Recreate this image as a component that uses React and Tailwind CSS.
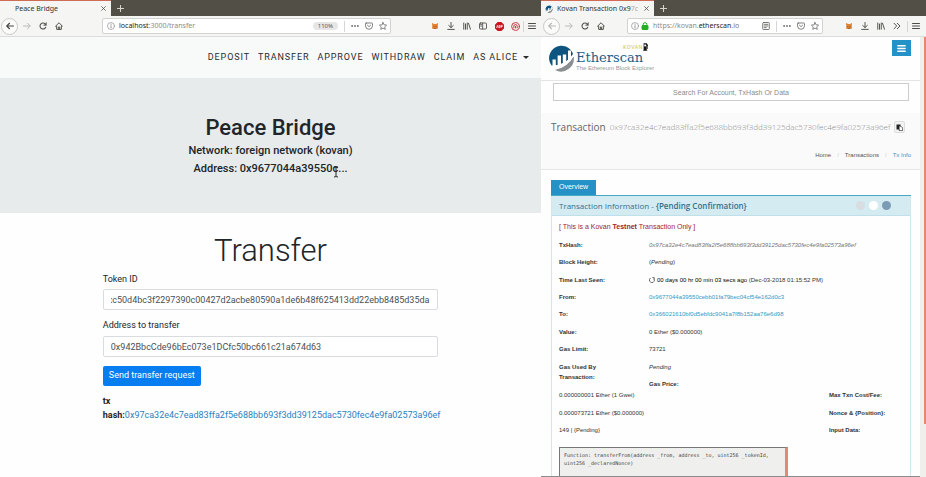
import { useEffect, useRef } from "react";

const TX_HASH = "0x97ca32e4c7ead83ffa2f5e688bb693f3dd39125dac5730fec4e9fa02573a96ef";

function Icon({ children, className = "size-2 text-[#55554f]", width = 1.8 }) {
  return (
    <svg
      viewBox="0 0 16 16"
      className={`shrink-0 ${className}`}
      fill="none"
      stroke="currentColor"
      strokeWidth={width}
      strokeLinecap="round"
      strokeLinejoin="round"
      aria-hidden="true"
    >
      {children}
    </svg>
  );
}

const BackIcon = ({ className }) => (
  <Icon className={className} width={2.2}><path d="M15 8H2M7 2.5L1.5 8L7 13.5" /></Icon>
);
const ForwardIcon = () => (
  <Icon className="size-2 text-[#b9b9b5]" width={2}><path d="M1 8H14M9 2.5L14.5 8L9 13.5" /></Icon>
);
const ReloadIcon = () => (
  <Icon width={2.2}>
    <path d="M13.5 10.5A6 6 0 1 1 12.5 4" />
    <path d="M15 1V7H9Z" fill="currentColor" strokeWidth="0.6" />
  </Icon>
);
const HomeIcon = () => (
  <Icon width={2}>
    <path d="M1 8.5L8 1.5L15 8.5M3.3 8V14.8H12.7V8" />
    <path d="M6.7 14.5V10H9.3V14.5" />
  </Icon>
);
const InfoIcon = () => (
  <Icon className="size-2 text-[#8a8a86]" width={1.3}>
    <circle cx="8" cy="8" r="7" />
    <path d="M8 7.5V11.8M8 4.3V4.8" strokeWidth="1.8" />
  </Icon>
);
const DotsIcon = () => (
  <Icon className="size-2 text-[#6b6b67]">
    <g fill="currentColor" stroke="none">
      <circle cx="2.2" cy="8" r="1.8" />
      <circle cx="8" cy="8" r="1.8" />
      <circle cx="13.8" cy="8" r="1.8" />
    </g>
  </Icon>
);
const PocketIcon = () => (
  <Icon className="size-2 text-[#6b6b67]" width={1.7}>
    <path d="M2.4 2H13.6Q15 2 15 3.4V7.5A7 7 0 0 1 1 7.5V3.4Q1 2 2.4 2Z" />
    <path d="M4.8 6.3L8 9.4L11.2 6.3" />
  </Icon>
);
const StarIcon = () => (
  <Icon className="size-2 text-[#6b6b67]" width={1.6}>
    <path d="M8 1L10.2 5.6L15.2 6.2L11.5 9.7L12.5 14.7L8 12.2L3.5 14.7L4.5 9.7L0.8 6.2L5.8 5.6Z" />
  </Icon>
);
const FoxIcon = () => (
  <Icon className="size-2">
    <g stroke="none">
      <path d="M2 2L6.5 4H10L14 2L13.5 9L14 13L10 14H6L2 13L2.7 9Z" fill="#e2812f" />
      <path d="M5 8L7 9L5.5 10.5ZM11 8L9 9L10.5 10.5Z" fill="#5b3413" />
      <path d="M6.5 12H9.5V14H6.5Z" fill="#8a5a33" />
    </g>
  </Icon>
);
const DownloadIcon = () => (
  <Icon width={2}><path d="M8 1V11M3.5 7L8 11.2L12.5 7M1.5 14.8H14.5" /></Icon>
);
const LibraryIcon = () => (
  <Icon width={2}><path d="M1.5 2V14.5M5 4V14.5M8.5 2V14.5M11 2.5L15 14.5" /></Icon>
);
const SidebarIcon = () => (
  <Icon width={1.8}>
    <rect x="1" y="2" width="14" height="12" rx="1.8" />
    <path d="M7.3 2V14M3.3 5H5M3.3 8H5" />
  </Icon>
);
const MenuIcon = () => (
  <Icon className="size-2 text-[#45453f]" width={1.9}><path d="M1 3H15M1 8H15M1 13H15" /></Icon>
);
const ChevronsIcon = () => (
  <Icon width={2}><path d="M2 2.5L7.5 8L2 13.5M8.5 2.5L14 8L8.5 13.5" /></Icon>
);
const ReaderIcon = () => (
  <Icon className="size-2 text-[#6b6b67]" width={1.8}>
    <rect x="1.5" y="1" width="13" height="14" rx="1.5" />
    <path d="M4.5 4.7H11.5M4.5 8H11.5M4.5 11.3H8.5" />
  </Icon>
);
const LockIcon = () => (
  <Icon className="size-2 text-[#22b022]" width={2}>
    <rect x="2" y="7" width="12" height="8" rx="1" fill="currentColor" />
    <path d="M4.5 7V4.8A3.5 3.5 0 0 1 11.5 4.8V7" />
  </Icon>
);
const AdblockIcon = () => (
  <Icon className="size-[9px]">
    <path d="M5 1H11L15 5V11L11 15H5L1 11V5Z" fill="#c9151f" stroke="#c9151f" />
    <path d="M3 10L4.3 6L5.6 10M7.2 6V10H8.7V6M10.8 10V6H13V8H11" stroke="#fff" strokeWidth="1.2" />
  </Icon>
);
const RedRingIcon = () => (
  <Icon className="size-[9px] text-[#c2313a]" width={1.7}>
    <circle cx="8" cy="8" r="6.9" />
    <path d="M5 10.5V7.5A3 3 0 0 1 11 7.5V10.5M8 8V10.5" />
  </Icon>
);

function ToolButton({ label, children }) {
  return (
    <button type="button" aria-label={label} className="flex size-4 shrink-0 items-center justify-center">
      {children}
    </button>
  );
}

function TabStrip({ title, icon, wide }) {
  return (
    <div className="flex h-4 bg-[#524f47]">
      <div
        className={`flex items-center border-t border-[#cf6c58] bg-[#f5f5f3] ${wide ? "w-[113px] pl-1" : "w-[111px] pl-[15px]"}`}
      >
        {icon}
        <span className="min-w-0 flex-1 overflow-hidden whitespace-nowrap text-[7px] leading-[14px] text-[#33332f]">
          {title}
        </span>
        <button type="button" aria-label="Close tab" className="flex w-4 shrink-0 justify-center">
          <Icon className="size-[5px] text-[#55554f]" width={2.6}><path d="M2 2L14 14M14 2L2 14" /></Icon>
        </button>
      </div>
      <button type="button" aria-label="New tab" className="flex w-[18px] items-center justify-center">
        <Icon className="size-[7px] text-[#d6d5cf]" width={2.4}><path d="M8 1V15M1 8H15" /></Icon>
      </button>
    </div>
  );
}

function NavButtons({ dim }) {
  return (
    <div className="flex items-center">
      <button
        type="button"
        aria-label="Back"
        className="mr-px flex size-[17px] shrink-0 items-center justify-center rounded-full border border-[#c9c9c6] bg-[#fbfbfa]"
      >
        <BackIcon className={dim ? "size-2 text-[#b9b9b5]" : "size-2 text-[#45453f]"} />
      </button>
      <ToolButton label="Forward"><ForwardIcon /></ToolButton>
      <ToolButton label="Reload"><ReloadIcon /></ToolButton>
      <ToolButton label="Home"><HomeIcon /></ToolButton>
    </div>
  );
}

function Divider() {
  return <span className="h-[11px] w-px shrink-0 bg-[#d6d6d2]" />;
}

function BridgeWindow() {
  const tokenRef = useRef(null);
  useEffect(() => {
    tokenRef.current.scrollLeft = tokenRef.current.scrollWidth;
  }, []);
  const links = ["Deposit", "Transfer", "Approve", "Withdraw", "Claim"];
  const field =
    "block h-[21px] w-full rounded-xs border border-[#d9dcde] bg-white px-[7px] text-[9px] text-[#495057]";

  return (
    <section className="flex min-w-0 flex-col bg-[#fdfefd]">
      <TabStrip title="Peace Bridge" />
      <div className="flex h-[21px] items-center border-b border-[#dcdcda] bg-[#f5f5f3] pr-px pl-px">
        <NavButtons />
        <div className="ml-[35px] flex h-4 min-w-0 flex-1 items-center rounded-xs border border-[#d2d2cf] bg-white pr-[3px] pl-1">
          <InfoIcon />
          <p className="ml-1 flex-1 truncate text-[7px] leading-3 text-[#8b8b88]">
            <span className="text-[#222]">localhost</span>:3000/transfer
          </p>
          <span className="mr-[6px] rounded-full bg-[#e6e6e4] px-[5px] text-[6px] leading-2 text-[#555]">110%</span>
          <Divider />
          <div className="ml-[6px] flex gap-[6px]">
            <DotsIcon /><PocketIcon /><StarIcon />
          </div>
        </div>
        <div className="ml-9 flex items-center">
          <ToolButton label="Wallet"><FoxIcon /></ToolButton>
          <ToolButton label="Downloads"><DownloadIcon /></ToolButton>
          <ToolButton label="Library"><LibraryIcon /></ToolButton>
          <ToolButton label="Sidebars"><SidebarIcon /></ToolButton>
          <ToolButton label="Ad blocker"><AdblockIcon /></ToolButton>
          <ToolButton label="Privacy"><RedRingIcon /></ToolButton>
          <Divider />
          <ToolButton label="Menu"><MenuIcon /></ToolButton>
        </div>
      </div>

      <nav className="flex h-[41px] items-center justify-end gap-2 bg-[#f8faf9] pr-3 font-[Roboto,sans-serif] text-[9px] tracking-widest text-[#292b2c] uppercase">
        {links.map((l) => (
          <a key={l} href="#" className="whitespace-nowrap">{l}</a>
        ))}
        <button type="button" className="flex items-center gap-[5px] whitespace-nowrap uppercase tracking-widest">
          As Alice
          <span className="border-x-3 border-t-3 border-x-transparent border-t-[#292b2c]" />
        </button>
      </nav>

      <header className="h-[135px] bg-[#e8ebeb] pt-9 text-center font-[Roboto,sans-serif] font-medium text-[#212529]">
        <h1 className="text-[22px] leading-7">Peace Bridge</h1>
        <p className="text-[11px] leading-[18px]">Network: foreign network (kovan)</p>
        <p className="text-[11px] leading-[18px]">
          Address: 0x9677044a39550
          <span className="relative">
            c
            <svg viewBox="0 0 6 12" className="absolute top-1 left-0 h-3 w-[6px]" fill="none" stroke="#222" strokeWidth="1" aria-hidden="true">
              <path d="M1 1Q3 1 3 2Q3 1 5 1M3 2V10M1 11Q3 11 3 10Q3 11 5 11" />
            </svg>
          </span>
          ...
        </p>
      </header>

      <main className="mx-auto w-[62%] max-w-[420px] pt-5 font-[Roboto,sans-serif] text-[9px] text-[#212529]">
        <h2 className="text-center text-[31px] leading-9 font-light">Transfer</h2>
        <form onSubmit={(e) => e.preventDefault()}>
          <label htmlFor="token" className="mt-[3px] block leading-[14px]">Token ID</label>
          <input
            id="token"
            ref={tokenRef}
            className={`mt-[3px] ${field}`}
            defaultValue="0xc50d4bc3f2297390c00427d2acbe80590a1de6b48f625413dd22ebb8485d35da"
          />
          <label htmlFor="address" className="mt-2 block leading-[14px]">Address to transfer</label>
          <input
            id="address"
            className={`mt-1 ${field}`}
            defaultValue="0x942BbcCde96bEc073e1DCfc50bc661c21a674d63"
          />
          <button type="submit" className="mt-[9px] block h-5 rounded-xs bg-[#067df0] px-[6px] text-white">
            Send transfer request
          </button>
        </form>
        <p className="mt-2 leading-[14px] font-bold">
          tx<br />
          hash:<a href="#" className="font-normal text-[#2b7fc4]">{TX_HASH}</a>
        </p>
      </main>
    </section>
  );
}

function EtherscanMark({ className }) {
  return (
    <svg viewBox="0 0 26 28" className={`shrink-0 ${className}`} aria-hidden="true">
      <path d="M3.6 21.5A12.3 12.3 0 1 1 25 10Q22 15.5 17 18.5Q11 21.5 3.6 21.5Z" fill="#0d5480" />
      <path d="M25.7 12.5A12.9 12.9 0 0 1 7 26Q20 23.5 25.7 12.5Z" fill="#8b8f92" />
      <path d="M4.5 22V15.5H7.8V22ZM9.6 22V11.5H13V21ZM14.8 20V10.5H18.2V18.5ZM20 17V6.5H23V14Z" fill="#fff" />
      <path d="M2.5 22.5Q17 21.5 25.4 10.5Q21 22 6 25.2Z" fill="#fff" />
      <path d="M8.5 25.8Q20.5 22.5 25.5 13Q24.5 24 13 27Q10.5 27 8.5 25.8Z" fill="#8b8f92" />
    </svg>
  );
}

const details = [
  ["TxHash:", <i className="text-[#777]">{TX_HASH}</i>],
  ["Block Height:", <>(<i>Pending</i>)</>],
  [
    "Time Last Seen:",
    <>
      <svg viewBox="0 0 12 12" className="mr-[2px] inline size-[6px] align-[-1px]" fill="none" stroke="#333" strokeWidth="1.6" aria-hidden="true">
        <path d="M3 2A5 5 0 1 0 10.5 4.5" strokeDasharray="8 1.2" />
        <path d="M7 1L10.5 1.5L10 5" />
      </svg>
      <span className="text-black">00 days 00 hr 00 min 03 secs ago</span> (Dec-03-2018 01:15:52 PM)
    </>,
  ],
  ["From:", <a href="#" className="text-[#3498c8]">0x9677044a39550cebb01fa79bec04cf54e162d0c3</a>],
  ["To:", <a href="#" className="text-[#3498c8]">0x366021610bf0d5ebfdc9041a7f8b152aa76e6d98</a>],
  ["Value:", "0 Ether ($0.000000)"],
  ["Gas Limit:", "73721"],
];

const shifted = [
  ["0.000000001 Ether (1 Gwei)", "Max Txn Cost/Fee:"],
  ["0.000073721 Ether ($0.000000)", "Nonce & {Position}:"],
  ["149 | {Pending}", "Input Data:"],
];

function EtherscanWindow() {
  return (
    <section className="flex min-w-0 flex-col bg-[#fdfefd]">
      <TabStrip
        wide
        title={<>Kovan Transaction 0x9<span className="opacity-40">7c</span></>}
        icon={<EtherscanMark className="mr-1 size-2" />}
      />
      <div className="flex h-[21px] items-center border-b border-[#dcdcda] bg-[#f5f5f3] pr-[2px] pl-[2px]">
        <NavButtons dim />
        <div className="ml-[18px] flex h-4 min-w-0 flex-1 items-center rounded-xs border border-[#d2d2cf] bg-white pr-[3px] pl-[3px]">
          <InfoIcon />
          <span className="ml-[2px] flex"><LockIcon /></span>
          <p className="ml-1 min-w-0 flex-1 overflow-hidden text-[7px] leading-3 whitespace-nowrap text-[#8b8b88]">
            https://kovan.<span className="text-[#222]">etherscan</span><span className="text-[#777]">.io</span>
          </p>
          <span className="mr-[6px] flex"><ReaderIcon /></span>
          <Divider />
          <div className="ml-[6px] flex gap-[6px]">
            <DotsIcon /><PocketIcon /><StarIcon />
          </div>
        </div>
        <div className="ml-[18px] flex items-center">
          <ToolButton label="Wallet"><FoxIcon /></ToolButton>
          <ToolButton label="Downloads"><DownloadIcon /></ToolButton>
          <ToolButton label="Library"><LibraryIcon /></ToolButton>
          <ToolButton label="More tools"><ChevronsIcon /></ToolButton>
          <span className="ml-[2px] flex"><Divider /></span>
          <ToolButton label="Menu"><MenuIcon /></ToolButton>
        </div>
      </div>

      <div className="flex flex-1">
        <div className="flex min-w-0 flex-1 flex-col border-b border-[#8c8c8c] font-['Liberation_Sans',Arial,sans-serif] text-[6px] text-[#333]">
          <header className="flex h-11 items-start justify-between border-b border-[#e4e4e4] pr-[9px] pl-[7px]">
            <div className="flex pt-[7px]">
              <EtherscanMark className="h-7 w-[26px]" />
              <div className="ml-[2px] w-[72px] whitespace-nowrap">
                <p className="flex h-[6px] items-center justify-end font-['Open_Sans',sans-serif] text-[5px] leading-[6px] font-semibold tracking-widest text-[#d5cf63]">
                  KOVAN
                  <svg viewBox="0 0 8 12" className="h-[8px] w-[5px] shrink-0" aria-hidden="true">
                    <path d="M1 0H6L8 3V9H7V4H6V11H7V12H0V11H1Z" fill="#111" />
                    <path d="M2 2H5V5H2Z" fill="#fff" />
                  </svg>
                </p>
                <p className="font-['DejaVu_Serif',serif] text-[13px] leading-[15px] text-[#1d5d86]">Etherscan</p>
                <p className="text-[6px] leading-[7px] text-[#9a9a9a]">The Ethereum Block Explorer</p>
              </div>
            </div>
            <button type="button" aria-label="Toggle menu" className="mt-[3px] flex h-4 w-[19px] items-center justify-center bg-[#2492c6] text-white">
              <Icon className="size-[9px] text-white" width={2.6}><path d="M1.5 3H14.5M1.5 8H14.5M1.5 13H14.5" /></Icon>
            </button>
          </header>

          <div className="pt-[2px] pr-[11px] pb-3 pl-3">
            <input
              type="text"
              aria-label="Search"
              placeholder="Search For Account, TxHash Or Data"
              className="block h-[18px] w-full border border-[#ccc] bg-white text-center text-[7px] placeholder:text-[#8b8b8b]"
            />
          </div>

          <div className="h-[57px] border-b border-[#e6e6e6] bg-[#fafafa] pt-[6px] pr-[9px] pl-[10px]">
            <div className="flex items-center gap-1 font-['Open_Sans',sans-serif] whitespace-nowrap">
              <h1 className="text-[10px] leading-4 text-[#666]">Transaction</h1>
              <span className="text-[8px] leading-4 font-light text-[#8f8f8f]">{TX_HASH}</span>
              <button type="button" aria-label="Copy hash" className="flex h-3 w-[11px] shrink-0 items-center justify-center rounded-xs border border-[#ddd] bg-[#f3f3f3]">
                <svg viewBox="0 0 14 14" className="size-[7px]" aria-hidden="true">
                  <path d="M1 1H9V4H6V11H1Z" fill="#222" />
                  <path d="M6.5 4.5H10L13.3 8V13.3H6.5Z" fill="#fff" stroke="#222" strokeWidth="1.4" />
                </svg>
              </button>
            </div>
            <nav className="mt-4 flex justify-end gap-[6px] leading-2 text-[#555]">
              <a href="#">Home</a>
              <span className="text-[#ccc]">/</span>
              <a href="#">Transactions</a>
              <span className="text-[#ccc]">/</span>
              <a href="#" className="text-[#3498c8]">Tx Info</a>
            </nav>
          </div>

          <div className="flex min-h-0 flex-1 flex-col pt-[10px] pr-[9px] pl-[10px]">
            <div className="border-b border-[#45a9c4]">
              <button type="button" className="block h-[15px] bg-[#2492c6] px-2 text-[7px] text-white">Overview</button>
            </div>
            <div className="flex-1 border-x border-[#cfe8ee]">
              <div className="flex h-5 items-center justify-between border-b border-[#bfe0e8] bg-[#d3ebf1] pr-[19px] pl-[7px]">
                <h2 className="font-['Open_Sans',sans-serif] text-[8px] text-[#31708f]">
                  Transaction Information - <b className="font-semibold">{"{Pending Confirmation}"}</b>
                </h2>
                <div className="flex gap-1">
                  <span className="size-[9px] rounded-full bg-[#d7dde0]" />
                  <span className="size-[9px] rounded-full bg-white" />
                  <span className="size-[9px] rounded-full bg-[#7c9bb5]" />
                </div>
              </div>
              <div className="pl-[7px]">
                <p className="pt-[6px] text-[7px] leading-[9px] text-[#a3232f]">
                  [ This is a Kovan <b>Testnet</b> Transaction Only ]
                </p>
                <dl className="mt-[5px] grid h-[122px] auto-rows-fr">
                  {details.map(([k, v]) => (
                    <div key={k} className="flex items-center leading-2 whitespace-nowrap">
                      <dt className="w-[90px] shrink-0 font-bold">{k}</dt>
                      <dd>{v}</dd>
                    </div>
                  ))}
                </dl>
                <div className="flex pt-1">
                  <p className="w-[90px] pr-7 leading-[10px] font-bold">Gas Used By Transaction:</p>
                  <div>
                    <p className="leading-[10px] italic">Pending</p>
                    <p className="mt-[7px] leading-[10px] font-bold">Gas Price:</p>
                  </div>
                </div>
                <div className="grid h-[53px] auto-rows-fr">
                  {shifted.map(([v, k]) => (
                    <div key={k} className="flex items-start pt-[1px] leading-[10px] whitespace-nowrap">
                      <span className="w-[270px]">{v}</span>
                      <b>{k}</b>
                    </div>
                  ))}
                </div>
                <pre className="mt-[5px] h-[29px] w-[229px] border-t border-r-3 border-l border-t-[#777] border-r-[#e58a6e] border-l-[#777] bg-[#efefee] pt-[3px] pl-1 font-['DejaVu_Sans_Mono',monospace] text-[5px] leading-2 text-[#444]">
                  {"Function: transferFrom(address _from, address _to, uint256 _tokenId,\nuint256 _declaredNonce)"}
                </pre>
              </div>
            </div>
          </div>
        </div>
        <div className="flex w-[6px] shrink-0 flex-col items-end bg-[#f1efec]">
          <div className="h-[88%] w-[2px] bg-[#e58a6e]" />
        </div>
      </div>
    </section>
  );
}

export default function App() {
  return (
    <div className="grid min-h-screen grid-cols-[541fr_385fr] font-['Noto_Sans',sans-serif]">
      <BridgeWindow />
      <EtherscanWindow />
    </div>
  );
}
